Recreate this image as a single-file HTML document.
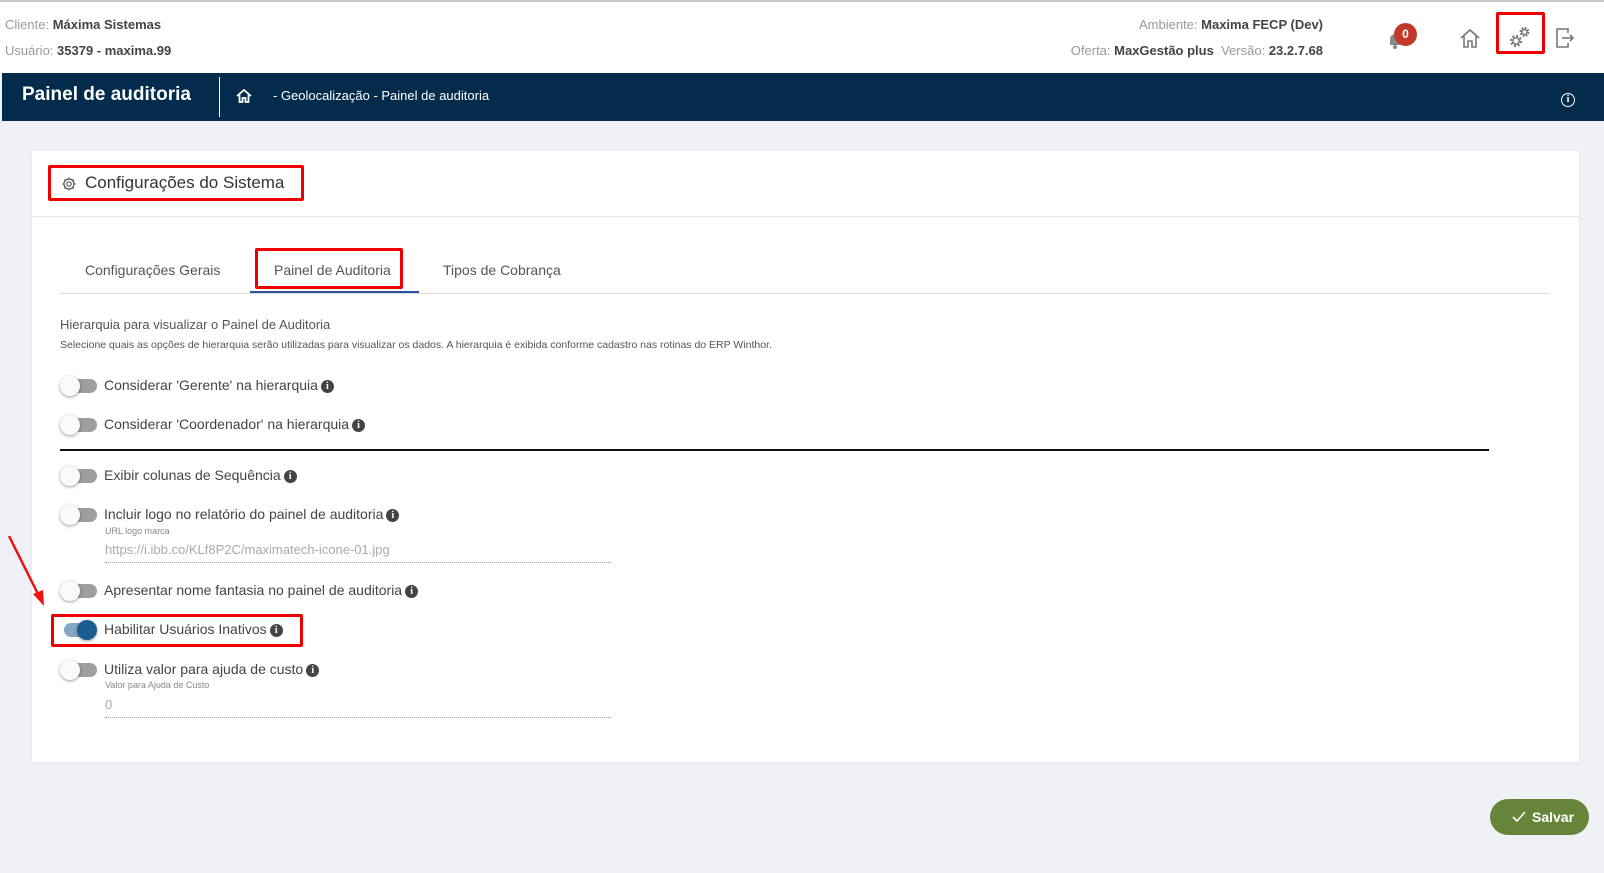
<!DOCTYPE html>
<html><head><meta charset="utf-8"><style>
*{margin:0;padding:0;box-sizing:border-box}
body{width:1604px;height:873px;overflow:hidden;background:#f0f1f6;font-family:"Liberation Sans",sans-serif;position:relative;color:#444}
.a{position:absolute;white-space:nowrap}
.top{position:absolute;left:0;top:0;width:1604px;height:73px;background:#fff;border-top:2px solid #c8c8c8}
.g{color:#999}.b{color:#444;font-weight:bold}
.nav{position:absolute;left:2px;top:73px;width:1602px;height:48px;background:#022b4c;color:#fff}
.card{position:absolute;left:32px;top:151px;width:1547px;height:611px;background:#fff;box-shadow:0 1px 4px rgba(0,0,0,.06)}
.red{position:absolute;border:3px solid #ee0000;border-radius:2px}
.tg{position:absolute;left:60px;width:37px;height:14px}
.tg .t{position:absolute;left:4px;top:0;width:33px;height:14px;border-radius:7px;background:#9e9e9e}
.tg .k{position:absolute;left:0;top:-3px;width:20px;height:20px;border-radius:50%;background:#fafafa;box-shadow:0 1px 3px rgba(0,0,0,.4)}
.lbl{position:absolute;left:104px;font-size:14px;color:#444}
.i{display:inline-block;width:13px;height:13px;border-radius:50%;background:#444;color:#fff;font-size:10px;font-weight:bold;text-align:center;line-height:13px;vertical-align:1px;margin-left:3px;font-family:"Liberation Serif",serif}
.dot{position:absolute;left:105px;width:506px;border-top:1px dotted #999}
</style></head><body>
<div class="top"></div>
<div class="a" style="left:5px;top:17px;font-size:13px"><span class="g">Cliente: </span><span class="b">Máxima Sistemas</span></div>
<div class="a" style="left:5px;top:43px;font-size:13px"><span class="g">Usuário: </span><span class="b">35379 - maxima.99</span></div>
<div class="a" style="right:281px;top:17px;font-size:13px"><span class="g">Ambiente: </span><span class="b">Maxima FECP (Dev)</span></div>
<div class="a" style="right:281px;top:43px;font-size:13px"><span class="g">Oferta: </span><span class="b">MaxGestão plus</span>&nbsp;&nbsp;<span class="g">Versão: </span><span class="b">23.2.7.68</span></div>
<svg class="a" style="left:1387px;top:30px" width="16" height="20"><path d="M3 15 V9 a5 5 0 0 1 10 0 V15 Z" fill="#888"/><circle cx="8" cy="17" r="2" fill="#888"/></svg>
<div class="a" style="left:1394px;top:23px;width:23px;height:23px;border-radius:50%;background:#c0392b;color:#fff;font-size:12px;font-weight:bold;text-align:center;line-height:23px">0</div>
<svg class="a" style="left:1459px;top:27px" width="22" height="22" fill="none" stroke="#777" stroke-width="1.6"><path d="M2 11 L11 3 L20 11 M5 9 V20 H9 V14 H13 V20 H17 V9"/></svg>
<div class="red" style="left:1496px;top:12px;width:49px;height:42px"></div>
<svg class="a" style="left:1508px;top:25px" width="24" height="24" fill="none" stroke="#777"><circle cx="8" cy="16" r="3.2" stroke-width="1.5"/><circle cx="8" cy="16" r="5" stroke-width="2.2" stroke-dasharray="2 1.93"/><circle cx="16.5" cy="7" r="2.5" stroke-width="1.5"/><circle cx="16.5" cy="7" r="4" stroke-width="2" stroke-dasharray="1.8 1.34"/></svg>
<svg class="a" style="left:1555px;top:27px" width="20" height="22" fill="none" stroke="#777" stroke-width="1.6"><path d="M13 6 V2 H2 V20 H13 V16 M7 11 H18 M15 8 L18 11 L15 14"/></svg>
<div class="nav">
<div class="a" style="left:20px;top:11px;font-size:19px;font-weight:bold">Painel de auditoria</div>
<div class="a" style="left:217px;top:4px;width:1px;height:40px;background:#fff"></div>
<svg class="a" style="left:234px;top:15px" width="16" height="16" fill="none" stroke="#fff" stroke-width="1.8"><path d="M1 8 L8 2 L15 8 M3.5 6.5 V14 H6.5 V10 H9.5 V14 H12.5 V6.5"/></svg>
<div class="a" style="left:271px;top:15px;font-size:13px">- Geolocalização - Painel de auditoria</div>
<div class="a" style="left:1559px;top:20px;width:14px;height:14px;border:1.5px solid #fff;border-radius:50%;font-size:10px;font-weight:bold;text-align:center;line-height:11px;font-family:'Liberation Serif',serif">i</div>
</div>
<div class="card"></div>
<div class="a" style="left:32px;top:216px;width:1547px;height:1px;background:#e8e8e8"></div>
<div class="red" style="left:48px;top:165px;width:256px;height:36px"></div>
<svg class="a" style="left:62px;top:177px" width="14" height="14" fill="none" stroke="#555" stroke-width="1.2"><circle cx="7" cy="7" r="2.2"/><circle cx="7" cy="7" r="5"/><path d="M7 0.5v2M7 11.5v2M0.5 7h2M11.5 7h2M2.4 2.4l1.4 1.4M10.2 10.2l1.4 1.4M2.4 11.6l1.4-1.4M10.2 3.8l1.4-1.4"/></svg>
<div class="a" style="left:85px;top:173px;font-size:17px;color:#333">Configurações do Sistema</div>
<div class="a" style="left:85px;top:262px;font-size:14px;color:#555">Configurações Gerais</div>
<div class="a" style="left:274px;top:262px;font-size:14px;color:#555">Painel de Auditoria</div>
<div class="a" style="left:443px;top:262px;font-size:14px;color:#555">Tipos de Cobrança</div>
<div class="a" style="left:60px;top:293px;width:1490px;height:1px;background:#ddd"></div>
<div class="a" style="left:250px;top:291px;width:169px;height:2px;background:#2c4fa0"></div>
<div class="red" style="left:255px;top:248px;width:148px;height:41px"></div>
<div class="a" style="left:60px;top:317px;font-size:13px;color:#555">Hierarquia para visualizar o Painel de Auditoria</div>
<div class="a" style="left:60px;top:339px;font-size:10.5px;color:#555">Selecione quais as opções de hierarquia serão utilizadas para visualizar os dados. A hierarquia é exibida conforme cadastro nas rotinas do ERP Winthor.</div>
<div class="tg" style="top:379px"><div class="t"></div><div class="k"></div></div>
<div class="lbl" style="top:377px">Considerar 'Gerente' na hierarquia<span class="i">i</span></div>
<div class="tg" style="top:418px"><div class="t"></div><div class="k"></div></div>
<div class="lbl" style="top:416px">Considerar 'Coordenador' na hierarquia<span class="i">i</span></div>
<div class="a" style="left:60px;top:449px;width:1429px;height:1.5px;background:#111"></div>
<div class="tg" style="top:469px"><div class="t"></div><div class="k"></div></div>
<div class="lbl" style="top:467px">Exibir colunas de Sequência<span class="i">i</span></div>
<div class="tg" style="top:508px"><div class="t"></div><div class="k"></div></div>
<div class="lbl" style="top:506px">Incluir logo no relatório do painel de auditoria<span class="i">i</span></div>
<div class="a" style="left:105px;top:526px;font-size:9px;color:#888">URL logo marca</div>
<div class="a" style="left:105px;top:542px;font-size:13px;color:#aaa">https://i.ibb.co/KLf8P2C/maximatech-icone-01.jpg</div>
<div class="dot" style="top:562px"></div>
<div class="tg" style="top:584px"><div class="t"></div><div class="k"></div></div>
<div class="lbl" style="top:582px">Apresentar nome fantasia no painel de auditoria<span class="i">i</span></div>
<div class="tg" style="top:623px"><div class="t" style="background:#85a7c5"></div><div class="k" style="left:17px;background:#1b5b91"></div></div>
<div class="lbl" style="top:621px">Habilitar Usuários Inativos<span class="i">i</span></div>
<div class="red" style="left:51px;top:614px;width:252px;height:33px"></div>
<div class="tg" style="top:663px"><div class="t"></div><div class="k"></div></div>
<div class="lbl" style="top:661px">Utiliza valor para ajuda de custo<span class="i">i</span></div>
<div class="a" style="left:105px;top:680px;font-size:9px;color:#888">Valor para Ajuda de Custo</div>
<div class="a" style="left:105px;top:697px;font-size:13px;color:#aaa">0</div>
<div class="dot" style="top:717px"></div>
<svg class="a" style="left:0;top:530px" width="50" height="80"><path d="M9 6 L40 68" stroke="#ee1111" stroke-width="2.5"/><path d="M44 76 L33 64 L43 60 Z" fill="#ee1111"/></svg>
<div class="a" style="left:1490px;top:799px;width:99px;height:36px;border-radius:18px;background:#66853a;color:#fff;font-size:14px;font-weight:bold;line-height:36px;padding-left:42px">Salvar</div>
<svg class="a" style="left:1511px;top:810px" width="16" height="14" fill="none" stroke="#fff" stroke-width="1.6"><path d="M2 7 L6 11 L14 2"/></svg>
</body></html>
